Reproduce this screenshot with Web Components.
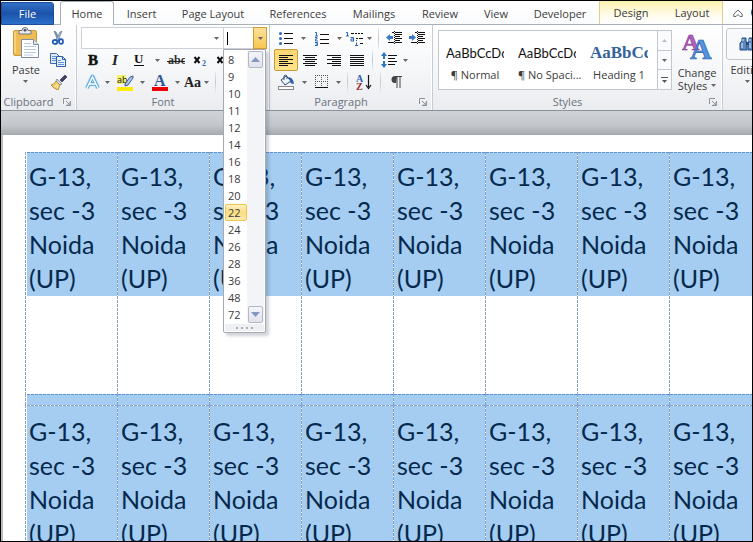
<!DOCTYPE html>
<html lang="en">
<head>
<meta charset="utf-8">
<title>Document - Word</title>
<style>
  html, body { height: 100%; margin: 0; }
  body { font: 11px/16px "Open Sans", "Noto Sans", sans-serif; color: #3b3b3b; overflow: hidden; }
</style>
</head>
<body>
<word-window></word-window>
<script>
const caret = '<svg width="5" height="3" viewBox="0 0 5 3"><path d="M0 0h5L2.5 3z" fill="#666"/></svg>';
const lines = (xs) => xs.map(([x, w], i) => `<path d="M${x} ${2.5 + i * 2}h${w}" stroke="#111"/>`).join('');
const svg = (w, h, body) => `<svg width="${w}" height="${h}" viewBox="0 0 ${w} ${h}" fill="none">${body}</svg>`;
const letter = (x, y, size, fill, t, extra = '') => `<text x="${x}" y="${y}" font-family="Liberation Serif" font-weight="bold" font-size="${size}" fill="${fill}" ${extra}>${t}</text>`;
const indentLines = '<path d="M6 2.5h2M9 2.5h7M9 4.5h7M9 6.5h5M9 8.5h7M9 10.5h5M2 12.5h6M9 12.5h7" stroke="#111"/><path d="M8.5 1v14" stroke="#111" stroke-dasharray="1 1"/>';
const icons = {
  caret,
  paste: svg(28, 32, `<rect x="1.5" y="3.5" width="23" height="25" rx="1.5" fill="#f0bd55" stroke="#c99a3c"/><path d="M3 5v21" stroke="#ffe2a0"/><path d="M7 3.5h3q0-3 3-3t3 3h3V7H7z" fill="#e8ebef" stroke="#6d747c"/><rect x="11.5" y="2" width="3" height="2.5" rx="1" fill="#555"/><path d="M9.5 12.5h12l5 5v13h-17z" fill="#fff" stroke="#7c8da5"/><path d="M21.5 12.5v5h5" fill="#dbe6f5" stroke="#7c8da5"/><path d="M12 16.5h7M12 19.5h12M12 22.5h12M12 25.5h12M12 28h9" stroke="#b6c9e2"/>`),
  cut: svg(14, 16, `<path d="M3 1l2 1 4 8-2 1z" fill="#8097b4" stroke="#5a6f8d" stroke-width=".6"/><path d="M11 1l-2 1-4 8 2 1z" fill="#a8bad0" stroke="#5a6f8d" stroke-width=".6"/><ellipse cx="4" cy="12" rx="2.3" ry="2" stroke="#245cb8" stroke-width="1.8"/><ellipse cx="10" cy="11.5" rx="2" ry="2.4" stroke="#245cb8" stroke-width="1.8"/>`),
  copy: svg(16, 14, `<path d="M.5.5h6l3 3v7h-9z" fill="#dfeafb" stroke="#3d68a8"/><path d="M2 3.5h4M2 5.5h5M2 7.5h5" stroke="#5e93d8"/><path d="M6.5 3.5h6l3 3v7h-9z" fill="#e6f0fd" stroke="#2f5da5"/><path d="M12.5 3.5v3h3" stroke="#2f5da5"/><path d="M8 7.5h3M8 9.5h6M8 11.5h6" stroke="#5e93d8"/>`),
  painter: svg(17, 15, `<path d="M10 5l5-5 2 2-5 5z" fill="#3c3e63" stroke="#26284b" stroke-width=".6"/><path d="M7 4l5 5-2 1-4-4z" fill="#d8dee6" stroke="#6b6f7b" stroke-width=".7"/><path d="M6 6l4 4-2 5q-4-1-7-5 3 0 5-4z" fill="#f2cd69" stroke="#a97d28" stroke-width=".8"/><path d="M5 12l2-3M7 13l1-3" stroke="#fff0b5"/>`),
  launcher: svg(8, 8, '<path d="M.5 6V.5H6" stroke="#8d939b"/><path d="M7.5 3v4.5H3M3 3l3.5 3.5M7 4v3H4" stroke="#8d939b"/>'),
  bold: svg(12, 14, letter(1, 12, 15, '#111', 'B', 'stroke="#111" stroke-width=".5"')),
  italic: svg(12, 14, letter(2, 12, 15, '#222', 'I', 'font-style="italic"')),
  underline: svg(12, 14, letter(1, 10, 13, '#111', 'U') + '<path d="M1 12.5h10" stroke="#111"/>'),
  strike: svg(18, 14, letter(1, 11, 12, '#333', 'abc') + '<path d="M0 8.5h18" stroke="#222"/>'),
  sub: svg(14, 14, '<path d="M1.500 4l5 6M6.500 4l-5 6" stroke="#111" stroke-width="2"/>' + letter(9, 13, 8, '#2d67bd', '2')),
  sup: svg(14, 14, '<path d="M1.500 4l5 6M6.500 4l-5 6" stroke="#111" stroke-width="2"/>' + letter(9, 6, 8, '#2d67bd', '2')),
  glow: svg(17, 17, '<path d="M3 14L8.5 2.5 14 14M5 10h7" stroke="#c4e6fb" stroke-width="5" stroke-linejoin="round"/><path d="M3 14L8.5 2.5 14 14M5 10h7" stroke="#5ba5dc" stroke-width="3.4" stroke-linejoin="round"/><path d="M3 14L8.5 3 14 14M5 10h7" stroke="#fff" stroke-width="1.5"/>'),
  highlight: svg(17, 17, '<rect y="1" width="9" height="9" fill="#f5f16b"/><text x="0" y="9" font-family="Open Sans" font-size="9" fill="#111">ab</text><path d="M8 10l5-7 3-1v2l-5 7-3 1z" fill="#a9c4e8" stroke="#3d5f96"/><rect y="13" width="16" height="4" fill="#ffec00"/>'),
  fontcolor: svg(16, 17, letter(2, 12, 16, '#2c5898', 'A') + '<rect y="13" width="16" height="4" fill="#f00000"/>'),
  aa: svg(18, 14, letter(1, 12, 14, '#222', 'Aa')),
  bullets: svg(14, 14, '<circle cx="1.5" cy="2.5" r="1.5" fill="#2d67bd"/><circle cx="1.5" cy="7.5" r="1.5" fill="#2d67bd"/><circle cx="1.5" cy="12.5" r="1.5" fill="#2d67bd"/><path d="M5 2.5h9M5 7.5h9M5 12.5h9" stroke="#111"/>'),
  numbers: svg(15, 15, '<path d="M1 1.5h1.5V5M1 5h3M1 6.5h2v1.5H1.5V10H4M1 11.5h2.5v3H1M1.5 13h2" stroke="#2d67bd"/><path d="M6 3.5h9M6 8.5h9M6 12.5h9" stroke="#111"/>'),
  multi: svg(17, 15, '<path d="M0 1.5h1.5V5M0 5h3M4.5 6.5h3V10M7.5 8H5v2h3M10.5 11.5V14M9 14.5h3M10 9.5h1" stroke="#2d67bd"/><path d="M5 2.5h3M9 2.5h2M12 2.5h2M15 2.5h2M10 7.5h2M13 7.5h4M14 12.5h3" stroke="#111"/>'),
  outdent: svg(17, 16, indentLines + '<path d="M0 7.5L4 4v2h3v3H4v2z" fill="#3b7cc9"/>'),
  indent: svg(17, 16, indentLines + '<path d="M7 7.5L3 4v2H0v3h3v2z" fill="#3b7cc9"/>'),
  left: svg(14, 14, lines([[0, 14], [0, 9], [0, 14], [0, 9], [0, 14], [0, 9]])),
  center: svg(14, 14, lines([[0, 14], [2, 10], [0, 14], [2, 10], [0, 14], [2, 10]])),
  right: svg(14, 14, lines([[0, 14], [5, 9], [0, 14], [5, 9], [0, 14], [5, 9]])),
  justify: svg(14, 14, lines([[0, 14], [0, 14], [0, 14], [0, 14], [0, 14], [0, 14]])),
  spacing: svg(16, 16, '<path d="M3 0l3 4H4v3H2V4H0zM3 16l3-4H4V9H2v3H0z" fill="#2f72c9"/><path d="M7 3.5h9M7 6.5h7M7 9.5h9M7 12.5h7" stroke="#111"/>'),
  bucket: svg(18, 16, '<path d="M3 6l5-4 5 5-6 4z" fill="#eef4fb" stroke="#33507d"/><path d="M6 6V2q1-2 3 0v3" stroke="#33507d"/><path d="M10 3q5 0 6 7-4 0-4-3z" fill="#2c5fae"/><rect x=".5" y="12.5" width="15" height="3" fill="#fff" stroke="#888"/>'),
  borders: svg(14, 14, '<path d="M.5 0v13M6.5 0v13M12.5 0v13M0 .5h13M0 6.5h13" stroke="#555" stroke-dasharray="1 1"/><path d="M0 12.5h13" stroke="#111"/>'),
  sort: svg(16, 16, letter(0, 8, 10, '#2d5fae', 'A') + letter(0, 16, 10, '#9b2d2d', 'Z') + '<path d="M12.5 1v12M10 11l2.5 3.5L15 11" stroke="#111" stroke-width="1.2"/>'),
  pilcrow: svg(12, 14, '<path d="M6 1H4a3.5 3.5 0 000 7h1z" fill="#444"/><path d="M4 1.5h7M6 1v12M9 1v12" stroke="#444"/>'),
  change: svg(30, 28, letter(0, 18, 24, '#b65fc0', 'A', 'stroke="#7c3791" stroke-width=".6"') + letter(8, 27, 30, '#5593dc', 'A', 'stroke="#2b62ad" stroke-width=".7"')),
  binoculars: svg(18, 14, '<path d="M3 1h4v3l1 2v7H1V6l2-2zM10 1h4v3l2 2v7H9V6l1-2z" fill="#5d87bf" stroke="#244a85"/><path d="M3 6v5M11 6v5M4 2v2M11 2v2" stroke="#dbe9fa"/><path d="M7 5h3v3H7z" fill="#244a85"/>'),
  collapse: svg(10, 9, '<path d="M.8 5L5 1l4.2 4v2.5H7L5 5.5 3 7.500H.8z" stroke="#666" stroke-linejoin="round"/>'),
  up: svg(9, 5, '<path d="M0 5L4.5 0 9 5z" fill="#8495c2"/>'),
  down: svg(9, 5, '<path d="M0 0l4.5 5L9 0z" fill="#8495c2"/>'),
  faintup: svg(5, 3, '<path d="M0 3L2.5 0 5 3z" fill="#b9bdc3"/>'),
  more: svg(7, 6, '<path d="M0 .5h7" stroke="#555"/><path d="M1 3h5L3.5 6z" fill="#555"/>')
};

function define(name, css, html) {
  const tpl = document.createElement('template');
  customElements.define(name, class extends HTMLElement {
    connectedCallback() {
      if (this.shadowRoot) return;
      const markup = typeof html === 'function' ? html(this) : html;
      tpl.innerHTML = `<style>*{box-sizing:border-box}button,input{font:inherit;color:inherit;margin:0;padding:0;border:0;background:none}svg{display:block;flex:none}${css}</style>${markup}`;
      this.attachShadow({ mode: 'open' }).append(tpl.content.cloneNode(true));
    }
  });
}

define('rb-tool', `
  :host { display: block; flex: none; height: 22px; }
  button { display: flex; width: 100%; height: 100%; align-items: center; justify-content: center; }
  :host([on]) button { border: 1px solid #c99a35; border-radius: 2px; background: linear-gradient(#fbd774, #fde48e); }`,
  el => { el.style.width = el.getAttribute('w') + 'px';
    return `<button aria-label="${el.getAttribute('icon')}">${icons[el.getAttribute('icon')]}</button>`; });

define('rb-sep', `:host { display: block; flex: none; width: 1px; height: 20px; margin: 0 4px; background: linear-gradient(#e8eaee, #c3c7ce, #e8eaee); }`, '');

define('rb-group', `
  :host { display: flex; flex-direction: column; flex: none; height: 85px; padding-top: 2px; border-right: 1px solid #c8ccd2; box-shadow: inset -1px 0 #fff; }
  .body { flex: 1; min-height: 0; }
  footer { display: flex; align-items: center; height: 17px; padding-right: 5px; color: #6a7280; }
  span { flex: 1; padding-right: 7px; text-align: center; white-space: nowrap; }`,
  el => `<div class="body"><slot></slot></div><footer><span>${el.getAttribute('label') || ''}</span>${el.hasAttribute('label') ? `<button aria-label="More options">${icons.launcher}</button>` : ''}</footer>`);

define('big-button', `
  :host { display: block; }
  button { display: flex; flex-direction: column; align-items: center; width: 100%; line-height: 13px; gap: 4px; }
  .pic { display: flex; align-items: center; justify-content: center; height: 32px; }
  :host([framed]) .pic { width: 44px; border: 1px solid #c3c7cd; border-radius: 3px; background: #f8f9fb; }
  :host([framed]) button { gap: 3px; }
  .text { display: flex; flex-direction: column; align-items: center; }
  .drop { display: flex; align-items: center; gap: 4px; min-height: 11px; white-space: nowrap; }`,
  el => `<button><span class="pic">${icons[el.getAttribute('icon')]}</span><span class="text"><slot></slot><span class="drop">${el.getAttribute('second') || ''}${caret}</span></span></button>`);

define('ribbon-tabs', `
  :host { display: grid; grid-template-columns: 53px 6px 54px 55px 88px 82px 70px 62px 50px 78px 63px 61px 30px 1fr; height: 24px; flex: none; overflow: hidden; background: linear-gradient(#fff, #fafbfc); box-shadow: inset 0 -1px #a9b0b9; }
  button { white-space: nowrap; text-align: center; line-height: 23px; height: 24px; }
  .file { color: #fff; height: 23px; border-radius: 0 3px 0 0; background: linear-gradient(#2f6fc6, #1c53a8 50%, #2a70cc); border: 1px solid #1d4d96; line-height: 21px; margin-top: 1px; }
  .home { border: 1px solid #a9b0b9; border-bottom: 0; border-radius: 3px 3px 0 0; background: #fff; line-height: 22px; }
  .ctx { height: 23px; background: linear-gradient(#fbf1b0, #fffdf2 70%, #fff); }
  .first { border-left: 1px solid #dfcf87; } .last { border-right: 1px solid #dfcf87; }
  .tool { display: flex; align-items: center; justify-content: center; }
  .help { width: 13px; height: 13px; margin: 5px 0 0 -2px; border-radius: 50%; background: #235cab; }`,
  `<button class="file">File</button><span></span><button class="home">Home</button><button>Insert</button><button>Page Layout</button><button>References</button><button>Mailings</button><button>Review</button><button>View</button><button>Developer</button><button class="ctx first">Design</button><button class="ctx last">Layout</button><button class="tool" aria-label="Minimize ribbon">${icons.collapse}</button><button class="help" aria-label="Help"></button>`);

const sizes = [8, 9, 10, 11, 12, 14, 16, 18, 20, 22, 24, 26, 28, 36, 48, 72];
define('size-list', `
  :host { display: block; width: 43px; padding: 1px; background: #fff; border: 1px solid #a5a9b0; border-radius: 0 0 2px 2px; box-shadow: 3px 3px 3px rgba(70, 80, 110, .25); }
  .main { display: flex; }
  ul { list-style: none; margin: 0; padding: 0; flex: 1; }
  li { height: 17px; }
  li button { display: block; width: 100%; height: 17px; line-height: 15px; padding-left: 2px; text-align: left; border: 1px solid transparent; border-radius: 2px; }
  li button.on { border-color: #edc54a; background: linear-gradient(#fdf1c0, #fbdc80 50%, #fdebb0); }
  .bar { display: flex; flex-direction: column; justify-content: space-between; width: 17px; background: #f3f4f7; padding: 0 1px; }
  .bar button { display: flex; align-items: center; justify-content: center; width: 15px; height: 17px; border: 1px solid #b4b8c4; border-radius: 2px; background: linear-gradient(#f4f5f9, #dfe3ec); }
  .grip { display: flex; align-items: center; justify-content: center; gap: 3px; height: 7px; margin-top: 1px; background: #eff0f3; }
  i { width: 2px; height: 2px; background: #aaaeb6; }`,
  `<div class="main"><ul>${sizes.map(s => `<li><button class="${s === 22 ? 'on' : ''}">${s}</button></li>`).join('')}</ul><div class="bar"><button aria-label="Scroll up">${icons.up}</button><button aria-label="Scroll down">${icons.down}</button></div></div><div class="grip"><i></i><i></i><i></i><i></i></div>`);

define('font-boxes', `
  :host { display: flex; height: 22px; }
  .box { position: relative; display: flex; height: 22px; border: 1px solid #cdd1d7; background: #fff; }
  .name { width: 143px; } .size { width: 43px; border-left: 0; }
  input { flex: 1; min-width: 0; padding: 0 2px; outline: 0; }
  button { display: flex; align-items: center; justify-content: center; width: 13px; }
  .size button { margin: -1px; width: 14px; border: 1px solid #d09a3a; background: linear-gradient(#fce29a, #f7c652); }
  .cursor { position: absolute; left: 3px; top: 4px; width: 1px; height: 13px; background: #000; }
  size-list { position: absolute; left: -1px; top: 21px; z-index: 5; }`,
  `<div class="box name"><input aria-label="Font"><button aria-label="Font list">${caret}</button></div><div class="box size"><input aria-label="Font size"><span class="cursor"></span><button aria-label="Font size list">${caret}</button><size-list></size-list></div>`);

define('style-gallery', `
  :host { display: flex; height: 60px; border: 1px solid #c3c7cd; background: #fff; }
  .items { flex: 1; display: grid; grid-template-columns: repeat(3, 72px); }
  .items button { display: flex; flex-direction: column; padding: 9px 7px 0; color: #3b3b3b; }
  b { display: block; width: 58px; overflow: hidden; height: 25px; font: 13px/26px Lato, sans-serif; color: #111; white-space: nowrap; text-align: left; }
  b.h { font: bold 17px/26px "Liberation Serif", serif; color: #35639c; }
  .items span { width: 100%; line-height: 20px; white-space: nowrap; text-align: center; }
  .scroll { display: flex; flex-direction: column; width: 15px; margin: -1px; }
  .scroll button { flex: 1; border: 1px solid #c3c7cd; margin-bottom: -1px; display: flex; align-items: center; justify-content: center; background: #fafbfc; }
  .scroll button:last-child { margin-bottom: 0; }`,
  `<div class="items"><button><b>AaBbCcDc</b><span>¶ Normal</span></button><button><b>AaBbCcDc</b><span>¶ No Spaci...</span></button><button><b class="h">AaBbCc</b><span>Heading 1</span></button></div><div class="scroll"><button aria-label="Previous styles">${icons.faintup}</button><button aria-label="Next styles">${caret}</button><button aria-label="All styles">${icons.more}</button></div>`);

const tools = s => s.trim().split(/\s+/).map(t => {
  if (t === '|') return '<rb-sep></rb-sep>';
  const [icon, w, on] = t.split(':');
  return `<rb-tool icon="${icon}" w="${w}" ${on ? 'on' : ''}></rb-tool>`;
}).join('');

define('word-ribbon', `
  :host { display: flex; flex: none; height: 86px; background: linear-gradient(#fff, #f6f7f9 50%, #eaecef); border-bottom: 1px solid #8b9199; position: relative; z-index: 2; }
  .row { display: flex; align-items: center; height: 22px; }
  .clip { width: 76px; } .font { width: 193px; } .para { width: 163px; } .styles { width: 290px; }
  .font .row, .para .row, font-boxes { padding-left: 4px; }
  .split { display: flex; }
  .split big-button { width: 50px; }
  .gal { display: flex; padding: 3px 0 0 5px; }
  style-gallery { width: 234px; }
  .gal big-button { flex: 1; }
  .edit { flex: 1 1 0; min-width: 0; overflow: hidden; border: 0; box-shadow: none; }
  .edit big-button { width: 44px; padding: 1px 0 0 6px; }`,
  `<rb-group class="clip" label="Clipboard"><div class="split"><big-button icon="paste">Paste</big-button><div>${tools('cut:14 copy:14 painter:14')}</div></div></rb-group>
   <rb-group class="font" label="Font"><font-boxes></font-boxes>
     <div class="row">${tools('bold:24 italic:22 underline:24 caret:13 strike:24 sub:23 sup:23')}</div>
     <div class="row">${tools('glow:22 caret:9 highlight:26 caret:9 fontcolor:26 caret:9 aa:20 caret:9 |')}</div></rb-group>
   <rb-group class="para" label="Paragraph">
     <div class="row">${tools('bullets:24 caret:10 numbers:26 caret:10 multi:20 caret:10 | outdent:22 indent:24')}</div>
     <div class="row">${tools('left:24:on center:24 right:24 justify:22 | spacing:24 caret:9')}</div>
     <div class="row">${tools('bucket:26 caret:9 borders:25 caret:9 | sort:24 | pilcrow:24')}</div></rb-group>
   <rb-group class="styles" label="Styles"><div class="gal"><style-gallery></style-gallery><big-button icon="change" second="Styles">Change</big-button></div></rb-group>
   <rb-group class="edit"><big-button icon="binoculars" framed>Editing</big-button></rb-group>`);

define('label-sheet', `
  :host { display: block; flex: 1; min-height: 0; overflow: hidden; background: #fff; padding: 17px 0 0 22px; border-left: 2px solid #b9bbbf; }
  table { --v: repeating-linear-gradient(#8aa0c4 0 3px, #fff 3px 4px); --h: repeating-linear-gradient(90deg, #5c93cc 0 3px, #b4d4f0 3px 4px);
    table-layout: fixed; width: 736px; border-collapse: collapse; font: 25px/34px Lato, sans-serif; color: #06294d; }
  td { padding: 0 0 0 1px; vertical-align: top; text-align: left; background: var(--v) 0 0 / 1px 100% no-repeat; }
  td:first-child div { margin-left: 1px; padding-left: 2px; }
  div { height: 144px; padding: 7px 0 0 3px; background: var(--h) 0 0 / 100% 1px no-repeat, #a4cdf1; white-space: nowrap; }
  .top td { height: 242px; }
  .gap div { height: 11px; padding: 0; }
  .next div { background: repeating-linear-gradient(90deg, #8aa0c4 0 3px, #fff 3px 4px) 0 0 / 100% 1px no-repeat, #a4cdf1; height: 176px; padding-top: 9px; }`,
  () => { const row = (cls, c) => `<tr class="${cls}">${`<td><div>${c}</div></td>`.repeat(8)}</tr>`;
    const address = 'G-13,<br>sec -3<br>Noida<br>(UP)';
    return `<table>${row('top', address)}${row('gap', '')}${row('next', address)}</table>`; });

define('word-window', `
  :host { display: flex; flex-direction: column; height: 100vh; box-sizing: border-box; border: 1px solid #000; overflow: hidden; }
  .band { flex: none; height: 24px; background: linear-gradient(#d0d3d7, #c3c7cc 60%, #a6aaaf); }`,
  `<ribbon-tabs></ribbon-tabs><word-ribbon></word-ribbon><div class="band"></div><label-sheet></label-sheet>`);
</script>
</body>
</html>
